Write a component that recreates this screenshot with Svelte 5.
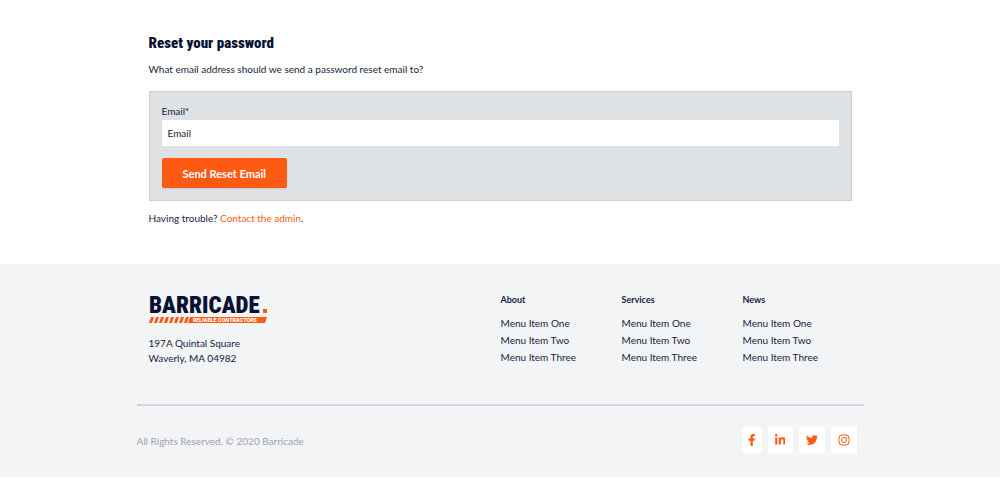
<script>
  const columns = ['About', 'Services', 'News'];
  const items = ['Menu Item One', 'Menu Item Two', 'Menu Item Three'];
  const socials = [
    {
      name: 'Facebook',
      size: 'slim',
      box: '0 0 320 512',
      path: 'M279 288l14-93h-89v-60c0-25 12-50 52-50h41V7s-37-7-72-7c-73 0-121 44-121 125v70H23v93h81v224h100V288z'
    },
    {
      name: 'LinkedIn',
      size: 'medium',
      box: '0 0 448 512',
      path: 'M100 448H7V149h93zM54 108C24 108 0 83 0 54a54 54 0 0 1 108 0c0 29-24 54-54 54zm394 340h-93V302c0-34-1-79-48-79-49 0-56 38-56 77v148h-93V149h89v41h1c13-24 43-48 88-48 94 0 112 62 112 142z'
    },
    {
      name: 'Twitter',
      size: 'wide',
      box: '0 0 512 512',
      path: 'M459 152c1 4 1 9 1 13 0 139-106 299-299 299-59 0-115-17-161-47 8 1 16 1 25 1 49 0 94-16 130-45-46-1-85-31-98-73 7 1 13 2 20 2 9 0 19-1 28-4-48-10-84-52-84-103v-1c14 8 30 13 47 13-28-19-47-51-47-87 0-19 5-37 14-53 52 64 130 106 217 110-2-8-3-16-3-24 0-58 47-105 105-105 30 0 58 13 77 33 24-5 46-13 66-25-8 24-24 45-46 58 21-2 42-8 60-16-14 21-32 39-52 54z'
    },
    { name: 'Instagram', size: 'wide', box: '0 0 24 24', path: null }
  ];
</script>

<main class="container reset">
  <h1>Reset your password</h1>
  <p>What email address should we send a password reset email to?</p>
  <form onsubmit={(e) => e.preventDefault()}>
    <label for="email">Email*</label>
    <input id="email" type="email" placeholder="Email" required />
    <button type="submit">Send Reset Email</button>
  </form>
  <p>Having trouble? <a class="accent" href="#contact">Contact the admin</a>.</p>
</main>

<footer>
  <div class="container">
    <div class="top">
      <div class="brand">
        <svg class="logo" viewBox="0 0 120 27" role="img" aria-label="Barricade Reliable Contractors">
          <text class="word" x="0" y="17">BARRICADE</text>
          <rect class="orange" x="114" y="13" width="4" height="4" />
          <path class="orange" d="M2 21h3l-2 6h-3zM7 21h3l-2 6h-3zM12 21h3l-2 6h-3zM17 21h3l-2 6h-3zM22 21h3l-2 6h-3zM27 21h3l-2 6h-3zM32 21h3l-2 6h-3zM37 21h3l-2 6h-3zM41 21h77l-2 6h-77z" />
          <text class="tag" x="44" y="26">RELIABLE CONTRACTORS</text>
        </svg>
        <address>197A Quintal Square<br />Waverly, MA 04982</address>
      </div>
      {#each columns as title}
        <nav aria-label={title}>
          <h2>{title}</h2>
          <ul>
            {#each items as item}
              <li><a href="#menu">{item}</a></li>
            {/each}
          </ul>
        </nav>
      {/each}
    </div>
  </div>
  <div class="bottom">
    <p>All Rights Reserved. © 2020 Barricade</p>
    <div class="socials">
      {#each socials as s}
        <a class={s.size} href="#social" aria-label={s.name}>
          <svg viewBox={s.box} aria-hidden="true">
            {#if s.path}
              <path d={s.path} />
            {:else}
              <g class="outline">
                <rect x="2" y="2" width="20" height="20" rx="6" />
                <circle cx="12" cy="12" r="5" />
              </g>
              <circle cx="17.5" cy="6.5" r="1.3" />
            {/if}
          </svg>
        </a>
      {/each}
    </div>
  </div>
</footer>

<style>
  :global(body) {
    margin: 0;
    background: #fff;
    color: #161d3e;
    font: 10px/15px Lato, sans-serif;
  }
  h1, h2, p, ul { margin: 0; padding: 0; }
  a { color: inherit; text-decoration: none; }
  .container, .bottom {
    box-sizing: border-box;
    max-width: 727px;
    margin: 0 auto;
  }
  .container { padding: 0 12px; }
  .reset { padding-top: 33px; padding-bottom: 38px; }
  h1 {
    color: #0a1233;
    font: 900 15px/20px "Roboto Condensed", Roboto, sans-serif;
    margin-bottom: 9px;
  }
  .accent { color: #ff5a14; }
  form {
    margin: 14px 0 10px;
    padding: 12px;
    border: 1px solid #ced2d6;
    background: #dee2e5;
    display: flex;
    flex-direction: column;
    align-items: flex-start;
  }
  label { margin-bottom: 1px; }
  input {
    box-sizing: border-box;
    width: 100%;
    height: 26px;
    padding: 0 6px;
    border: 0;
    background: #fff;
    color: inherit;
    font: inherit;
  }
  input::placeholder { color: #161d3e; opacity: 1; }
  button {
    margin-top: 12px;
    height: 30px;
    padding: 0 21px;
    border: 0;
    border-radius: 2px;
    background: #ff5a14;
    color: #fff;
    font: bold 11px/15px Lato, sans-serif;
    box-shadow: 0 1px 2px #c5c9ce;
  }
  footer { background: #f2f4f6; padding-top: 32px; }
  .top {
    display: grid;
    grid-template-columns: 1fr 121px 121px 109px;
    padding-bottom: 38px;
  }
  .logo { display: block; width: 120px; height: 27px; margin-bottom: 13px; overflow: visible; }
  .word { font: 900 23px "Roboto Condensed", Roboto, sans-serif; fill: #0a1233; }
  .orange { fill: #ff5a14; }
  .tag { font: 800 5px Inter, sans-serif; fill: #fff; }
  address { font-style: normal; }
  h2 { font: bold 9px/12px Lato, sans-serif; margin: -2px 0 9px; }
  ul { list-style: none; line-height: 17px; }
  .bottom {
    display: flex;
    justify-content: space-between;
    align-items: center;
    border-top: 2px solid #d2d5db;
    padding: 21px 7px 24px 0;
  }
  .bottom p { color: #9fa3b0; padding-top: 3px; }
  .socials { display: flex; gap: 6px; }
  .socials a {
    display: flex;
    align-items: center;
    justify-content: center;
    height: 26px;
    background: #fff;
    color: #ff5a14;
  }
  .slim { width: 20px; }
  .medium { width: 25px; }
  .wide { width: 26px; }
  .socials svg { height: 12px; fill: currentColor; }
  .outline { fill: none; stroke: currentColor; stroke-width: 2; }
</style>
